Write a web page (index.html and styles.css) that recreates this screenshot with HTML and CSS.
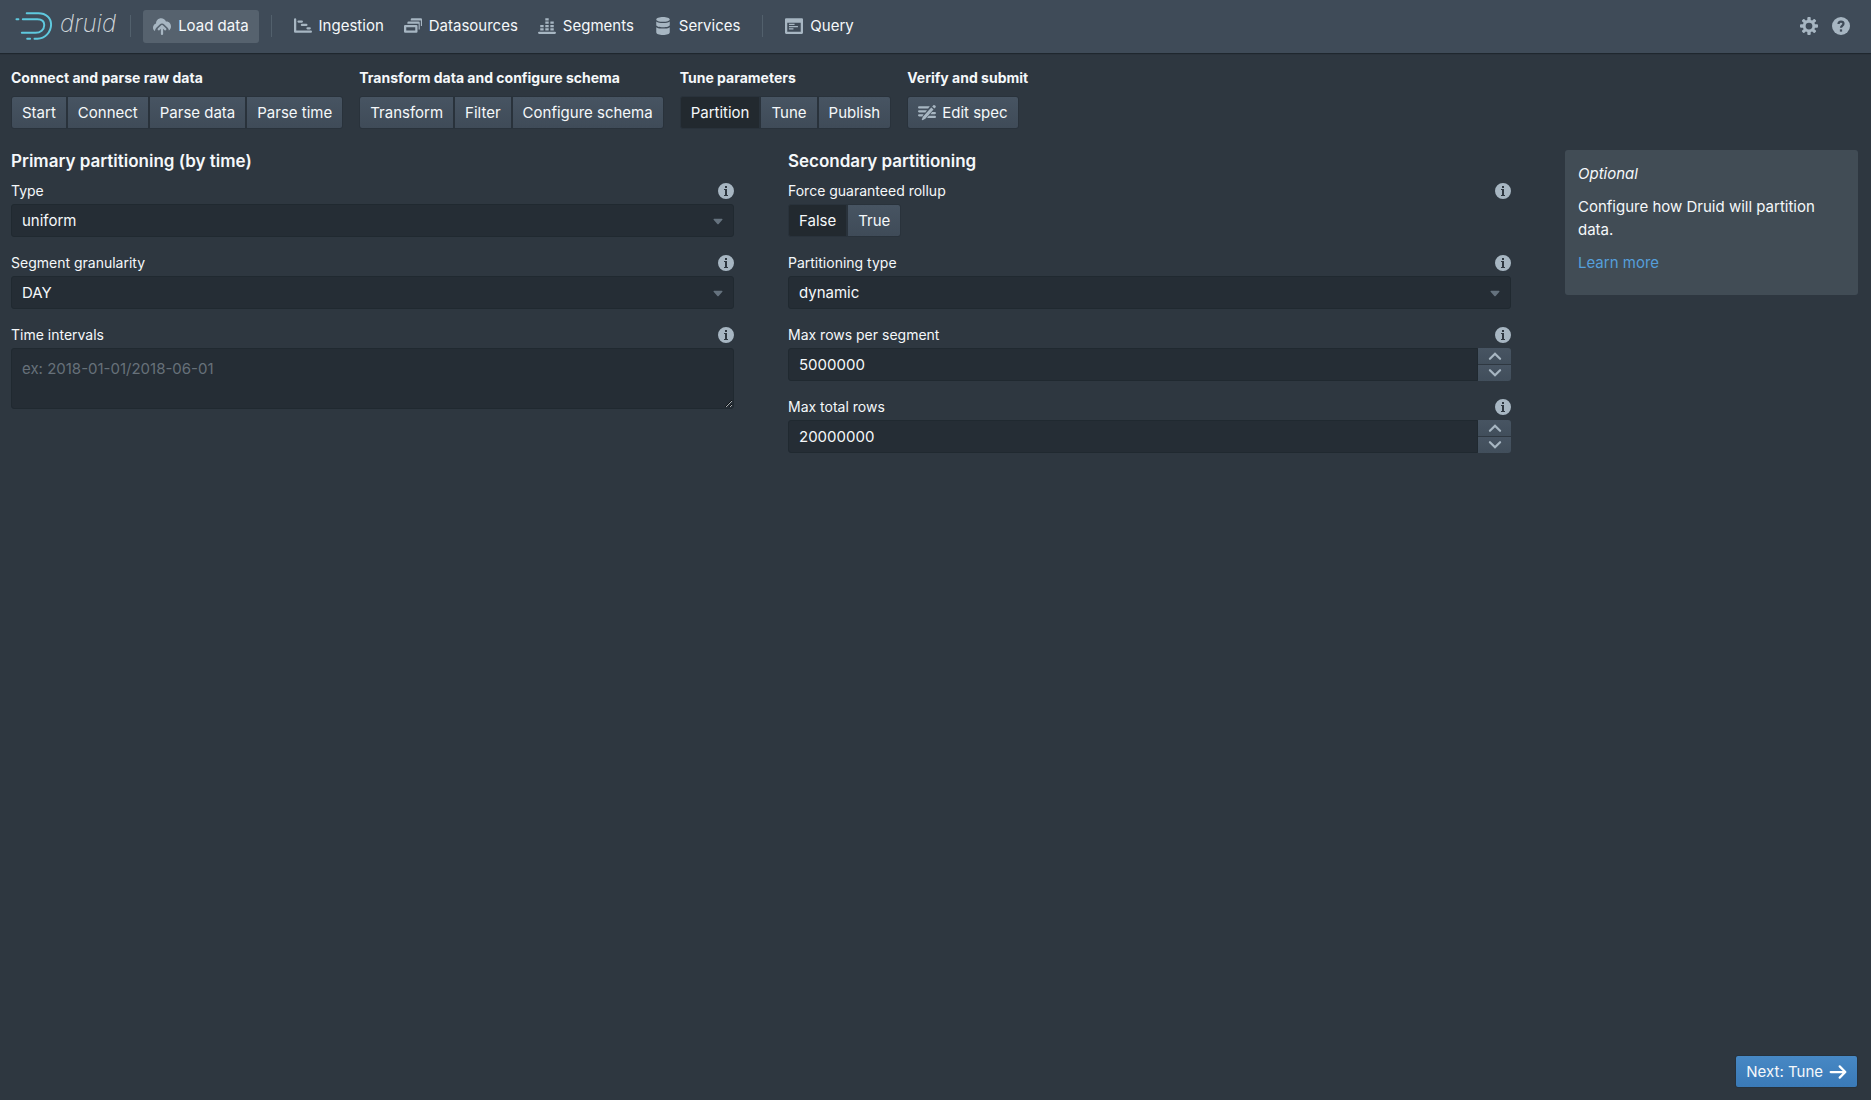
FILE: index.html
```html
<!DOCTYPE html>
<html lang="en">
  <head>
    <meta charset="UTF-8" />
    <meta name="viewport" content="width=device-width, initial-scale=1.0" />
    <title>Apache Druid</title>
    <link rel="stylesheet" href="styles.css">
  </head>
  <body>
    <!-- shared icons -->
    <svg class="sprite" aria-hidden="true">
      <symbol id="info" viewBox="0 0 16 16">
        <path fill-rule="evenodd" d="M8 0a8 8 0 1 0 0 16A8 8 0 0 0 8 0zM7 3h2v2H7V3zm3 10H6v-1h1V7H6V6h3v6h1v1z" />
      </symbol>
      <symbol id="up" viewBox="0 0 16 16">
        <path d="M3.500 10.500 8 6l4.500 4.500" fill="none" stroke="currentColor" stroke-width="2" stroke-linecap="round" />
      </symbol>
      <symbol id="down" viewBox="0 0 16 16">
        <path d="M3.500 5.500 8 10l4.500-4.500" fill="none" stroke="currentColor" stroke-width="2" stroke-linecap="round" />
      </symbol>
      <symbol id="caret" viewBox="0 0 16 16">
        <path d="M4 6.500c0-.3.200-.5.500-.5h7c.3 0 .5.200.5.500 0 .1 0 .2-.1.300l-3.500 4c-.2.200-.6.200-.8 0l-3.500-4C4 6.700 4 6.600 4 6.500z" />
      </symbol>
    </svg>

    <header class="navbar">
      <a class="logo" href="#" aria-label="druid">
        <svg class="logo-mark" viewBox="0 0 40 30" stroke="#5fc9de" stroke-width="2" stroke-linecap="round">
          <path d="M12 2h12c8 0 13 5 13 11.500C37 21 31 28 23 28h-3" />
          <path d="M8 8h15c4 0 7 2 7 6 0 5-4 8-9 8H7" />
          <path d="M1.500 8h2M12.500 28h3" />
        </svg>
        <span class="logo-text">druid</span>
      </a>
      <span class="divider"></span>
      <nav class="nav">
        <a class="nav-item active" href="#">
          <svg class="icon" viewBox="0 0 16 16"><path d="M8.700 7.300C8.500 7.100 8.300 7 8 7s-.5.100-.7.300l-3 3a1 1 0 0 0 1.400 1.400L7 10.400V15a1 1 0 0 0 2 0v-4.600l1.300 1.300a1 1 0 0 0 1.400-1.400l-3-3zM12 4c-.2 0-.3 0-.5.100C11 2.200 9.200 1 7.200 1 4.700 1 2.700 3 2.700 5.500v.3C1.200 6.300 0 7.800 0 9.500c0 1.200.7 2.300 1.700 3 0-.2 0-.3.100-.5.100-1 .6-1.800 1.200-2.400l3-3C6.500 6 7.200 5.700 8 5.700s1.500.300 2 .9l3 3c.7.700 1.100 1.600 1.100 2.500C15.300 11.300 16 10 16 8.500 16 6 14.300 4 12 4z" /></svg>
          Load data
        </a>
        <span class="divider"></span>
        <a class="nav-item" href="#">
          <svg class="icon" viewBox="0 0 16 16"><path d="M2 12V2a1 1 0 0 0-2 0v11a1 1 0 0 0 1 1h14a1 1 0 0 0 0-2H2zM4 3h3a1 1 0 0 1 0 2H4a1 1 0 0 1 0-2zm3 3h4a1 1 0 0 1 0 2H7a1 1 0 0 1 0-2zm5 3h2a1 1 0 0 1 0 2h-2a1 1 0 0 1 0-2z" /></svg>
          Ingestion
        </a>
        <a class="nav-item" href="#">
          <svg class="icon" viewBox="0 0 16 16"><path fill-rule="evenodd" d="M1 7h10a1 1 0 0 1 1 1v5a1 1 0 0 1-1 1H1a1 1 0 0 1-1-1V8a1 1 0 0 1 1-1zm1 2v3h8V9H2z" /><path d="M3 6V5a1 1 0 0 1 1-1h9a1 1 0 0 1 1 1v6h-1V6H3zM6 3V2a1 1 0 0 1 1-1h8a1 1 0 0 1 1 1v6h-1V3H6z" /></svg>
          Datasources
        </a>
        <a class="nav-item" href="#">
          <svg class="icon" viewBox="0 0 16 16"><path d="M1 13h14a1 1 0 0 1 0 2H1a1 1 0 0 1 0-2zM2 10h3v2H2zM2 7h3v2H2zM6.500 10h3v2h-3zM6.500 4h3v2h-3zM6.500 1h3v2h-3zM6.500 7h3v2h-3zM11 4h3v2h-3zM11 7h3v2h-3zM11 10h3v2h-3z" /></svg>
          Segments
        </a>
        <a class="nav-item" href="#">
          <svg class="icon" viewBox="0 0 16 16"><path d="M2 2.200C2 1 4.700 0 8 0s6 1 6 2.200S11.300 4.300 8 4.300 2 3.400 2 2.200zM2 4c1.200 1 3.500 1.400 6 1.400S12.800 5 14 4v3c0 1.200-2.700 2-6 2S2 8.200 2 7V4zm0 5c1.200 1 3.500 1.300 6 1.300S12.800 10 14 9v4.500c0 1.500-2.700 2.500-6 2.500s-6-1-6-2.500V9z" /></svg>
          Services
        </a>
        <span class="divider"></span>
        <a class="nav-item" href="#">
          <svg class="icon" viewBox="0 0 16 16"><path fill-rule="evenodd" d="M1 1h14a1 1 0 0 1 1 1v12a1 1 0 0 1-1 1H1a1 1 0 0 1-1-1V2a1 1 0 0 1 1-1zm1 4v8h12V5H2zm1.500 1h5v1h-5zm0 2h8v1h-8zm0 2h4v1h-4z" /></svg>
          Query
        </a>
      </nav>
      <div class="nav-right">
        <button class="icon-button" aria-label="Settings">
          <svg class="icon" viewBox="0 0 16 16"><path fill-rule="evenodd" d="M15.200 6.500h-1.900c-.1-.5-.3-.9-.5-1.300l1.300-1.300c.3-.3.300-.8 0-1.100l-.9-.9c-.3-.3-.8-.3-1.100 0l-1.300 1.300c-.4-.2-.8-.4-1.300-.5V.8c0-.4-.3-.8-.8-.8H7.300c-.4 0-.8.300-.8.800v1.900c-.5.100-.9.300-1.300.5L3.900 1.900c-.3-.3-.8-.3-1.100 0l-.9.9c-.3.3-.3.800 0 1.100l1.300 1.300c-.2.400-.4.800-.5 1.300H.8c-.5 0-.8.300-.8.800v1.400c0 .4.300.8.800.8h1.900c.1.500.3.900.5 1.300l-1.300 1.300c-.3.300-.3.800 0 1.100l.9.900c.3.300.8.300 1.100 0l1.300-1.300c.4.200.8.400 1.300.5v1.900c0 .5.300.8.800.8h1.400c.4 0 .8-.3.800-.8v-1.900c.5-.1.900-.3 1.300-.5l1.300 1.300c.3.300.8.300 1.100 0l.9-.9c.3-.3.300-.8 0-1.100l-1.300-1.300c.2-.4.400-.8.500-1.300h1.900c.5 0 .8-.3.800-.8V7.300c0-.5-.3-.8-.8-.8zM8 11a3 3 0 1 1 0-6 3 3 0 0 1 0 6z" /></svg>
        </button>
        <button class="icon-button" aria-label="Help">
          <svg class="icon" viewBox="0 0 16 16"><circle cx="8" cy="8" r="8" /><path d="M5.800 6.200C5.800 4.700 6.700 4 8 4s2.200.700 2.200 1.900C10.200 7.500 8 7.700 8 9.500" fill="none" stroke="#3f4b58" stroke-width="2" /><path d="M7 11h2v2H7z" fill="#3f4b58" /></svg>
        </button>
      </div>
    </header>

    <main class="load-data">
      <div class="steps">
        <section class="step-section">
          <h2>Connect and parse raw data</h2>
          <div class="button-group">
            <button class="button">Start</button>
            <button class="button">Connect</button>
            <button class="button">Parse data</button>
            <button class="button">Parse time</button>
          </div>
        </section>
        <section class="step-section">
          <h2>Transform data and configure schema</h2>
          <div class="button-group">
            <button class="button">Transform</button>
            <button class="button">Filter</button>
            <button class="button">Configure schema</button>
          </div>
        </section>
        <section class="step-section">
          <h2>Tune parameters</h2>
          <div class="button-group">
            <button class="button selected">Partition</button>
            <button class="button">Tune</button>
            <button class="button">Publish</button>
          </div>
        </section>
        <section class="step-section">
          <h2>Verify and submit</h2>
          <div class="button-group">
            <button class="button">
              <svg class="icon" viewBox="0 0 16 16"><path d="M1 2h9.500L9 4H1a1 1 0 0 1 0-2zM1 5.500h7L6.500 7.500H1a1 1 0 0 1 0-2zM1 9h4l-1.200 2H1a1 1 0 0 1 0-2zM12.500 7H15a1 1 0 0 1 0 2h-4zM9.500 10.500H15a1 1 0 0 1 0 2H8zM11.800 3.200l2 1.700-7.300 8.200-2.500 1.400-.7-.6 1-2.500zM12.600 2.300l1.100-1.200c.7-.8 2.700.9 2 1.700l-1.100 1.200z" /></svg>
              Edit spec
            </button>
          </div>
        </section>
      </div>

      <div class="content">
        <section class="column">
          <h3>Primary partitioning (by time)</h3>
          <div class="field">
            <div class="field-label">
              <label for="type">Type</label>
              <button class="info" aria-label="About type"><svg><use href="#info" /></svg></button>
            </div>
            <div class="select">
              <select id="type"><option>uniform</option><option>hashed</option></select>
              <svg class="caret"><use href="#caret" /></svg>
            </div>
          </div>
          <div class="field">
            <div class="field-label">
              <label for="granularity">Segment granularity</label>
              <button class="info" aria-label="About segment granularity"><svg><use href="#info" /></svg></button>
            </div>
            <div class="select">
              <select id="granularity"><option>DAY</option><option>HOUR</option></select>
              <svg class="caret"><use href="#caret" /></svg>
            </div>
          </div>
          <div class="field">
            <div class="field-label">
              <label for="intervals">Time intervals</label>
              <button class="info" aria-label="About time intervals"><svg><use href="#info" /></svg></button>
            </div>
            <textarea id="intervals" placeholder="ex: 2018-01-01/2018-06-01"></textarea>
          </div>
        </section>

        <section class="column">
          <h3>Secondary partitioning</h3>
          <div class="field">
            <div class="field-label">
              <span id="rollup">Force guaranteed rollup</span>
              <button class="info" aria-label="About guaranteed rollup"><svg><use href="#info" /></svg></button>
            </div>
            <div class="button-group" role="group" aria-labelledby="rollup">
              <button class="button selected">False</button>
              <button class="button">True</button>
            </div>
          </div>
          <div class="field">
            <div class="field-label">
              <label for="partitioning">Partitioning type</label>
              <button class="info" aria-label="About partitioning type"><svg><use href="#info" /></svg></button>
            </div>
            <div class="select">
              <select id="partitioning"><option>dynamic</option><option>hashed</option></select>
              <svg class="caret"><use href="#caret" /></svg>
            </div>
          </div>
          <div class="field">
            <div class="field-label">
              <label for="maxSegment">Max rows per segment</label>
              <button class="info" aria-label="About max rows per segment"><svg><use href="#info" /></svg></button>
            </div>
            <div class="numeric">
              <input type="text" id="maxSegment" value="5000000" />
              <div class="spinner">
                <button aria-label="Increase"><svg><use href="#up" /></svg></button>
                <button aria-label="Decrease"><svg><use href="#down" /></svg></button>
              </div>
            </div>
          </div>
          <div class="field">
            <div class="field-label">
              <label for="maxTotal">Max total rows</label>
              <button class="info" aria-label="About max total rows"><svg><use href="#info" /></svg></button>
            </div>
            <div class="numeric">
              <input type="text" id="maxTotal" value="20000000" />
              <div class="spinner">
                <button aria-label="Increase"><svg><use href="#up" /></svg></button>
                <button aria-label="Decrease"><svg><use href="#down" /></svg></button>
              </div>
            </div>
          </div>
        </section>

        <aside class="callout">
          <p><em>Optional</em></p>
          <p>Configure how Druid will partition data.</p>
          <p><a href="#">Learn more</a></p>
        </aside>
      </div>

      <div class="next-bar">
        <button class="button primary">
          Next: Tune
          <svg class="icon" viewBox="0 0 16 16" stroke="currentColor" stroke-width="2" stroke-linecap="round" stroke-linejoin="round"><path d="M1.500 8h13M9.500 3l5 5-5 5" /></svg>
        </button>
      </div>
    </main>
  </body>
</html>
```
FILE: styles.css
```css
* {
  box-sizing: border-box;
}
body {
  margin: 0;
  min-height: 100vh;
  display: flex;
  flex-direction: column;
  background-color: #2e3740;
  color: #f5f8fa;
  font-family: Inter, "Liberation Sans", sans-serif;
  font-size: 15px;
  line-height: 20px;
}
button,
input,
select,
textarea {
  font: inherit;
  color: inherit;
}
button {
  cursor: pointer;
}
svg {
  fill: currentColor;
}
.sprite {
  display: none;
}
.icon {
  width: 18px;
  height: 18px;
  flex: none;
  color: #a7b6c2;
}

.navbar {
  display: flex;
  align-items: center;
  height: 53px;
  padding: 0 14px 1px 15px;
  background-color: #3f4b58;
  box-shadow: 0 1px 1px #1f272e;
}
.logo {
  display: flex;
  align-items: center;
  gap: 6px;
  margin-right: 2px;
  color: #cfd5da;
  text-decoration: none;
}
.logo-mark {
  width: 39px;
  height: 30px;
  fill: none;
}
.logo-text {
  padding-bottom: 4px;
  font-size: 24px;
  font-weight: 200;
  font-style: italic;
  line-height: 28px;
}
.divider {
  width: 1px;
  height: 22px;
  margin: 0 12px;
  background-color: #52606c;
}
.nav {
  display: flex;
  align-items: center;
}
.nav-item {
  display: flex;
  align-items: center;
  gap: 7px;
  height: 33px;
  padding: 0 10px;
  border-radius: 3px;
  color: #f5f8fa;
  text-decoration: none;
}
.nav-item.active {
  background-color: #56626e;
}
.nav-right {
  display: flex;
  margin-left: auto;
}
.icon-button {
  display: flex;
  padding: 7px;
  border: none;
  background: none;
}
.icon-button:last-child {
  padding-right: 7px;
}

.load-data {
  flex: 1;
  display: flex;
  flex-direction: column;
  padding: 15px 13px 12px 11px;
}
.steps {
  display: flex;
  gap: 16px;
}
.step-section h2 {
  margin: 0 0 8px;
  font-size: 14px;
  font-weight: 700;
}
.button-group {
  display: flex;
}
.button {
  display: flex;
  align-items: center;
  gap: 6px;
  height: 33px;
  padding: 0 10px;
  border: 1px solid #29323b;
  background: linear-gradient(#475462, #3f4b58);
}
.button:first-child {
  border-radius: 3px 0 0 3px;
}
.button:last-child {
  border-radius: 0 3px 3px 0;
}
.button:only-child {
  border-radius: 3px;
}
.button.selected {
  background: #22292f;
}
.button.primary {
  border-color: #26323d;
  background: linear-gradient(#4788c4, #3a7ab8);
}
.primary .icon {
  fill: none;
  color: #fff;
}

.content {
  display: grid;
  grid-template-columns: 1fr 1fr 293px;
  gap: 54px;
  align-items: start;
  margin-top: 21px;
}
.column h3 {
  margin: 1px 0 10px;
  font-size: 17px;
  font-weight: 600;
  line-height: 20px;
}
.field {
  margin-bottom: 16px;
}
.field-label {
  display: flex;
  justify-content: space-between;
  align-items: center;
  margin-bottom: 3px;
  font-size: 14px;
}
.info {
  display: flex;
  padding: 0;
  border: none;
  background: none;
  color: #a7b6c2;
}
.info svg {
  width: 16px;
  height: 16px;
}
.select {
  position: relative;
}
.select select,
.numeric input,
textarea {
  display: block;
  width: 100%;
  height: 33px;
  padding: 0 10px;
  border: 1px solid #202930;
  border-radius: 3px;
  background-color: #252d35;
}
.select select {
  appearance: none;
}
.caret {
  position: absolute;
  right: 7px;
  top: 8px;
  width: 18px;
  height: 18px;
  color: #65727e;
  pointer-events: none;
}
textarea {
  height: 61px;
  padding: 10px;
  resize: vertical;
}
textarea::placeholder {
  color: #67717a;
}
.numeric {
  display: flex;
}
.numeric input {
  flex: 1;
  border-radius: 3px 0 0 3px;
}
.spinner {
  display: flex;
  flex-direction: column;
  gap: 1px;
  width: 33px;
  height: 33px;
}
.spinner button {
  flex: 1;
  display: flex;
  align-items: center;
  justify-content: center;
  min-height: 0;
  padding: 0;
  border: none;
  background: linear-gradient(#475462, #414e5b);
  color: #a7b6c2;
}
.spinner button:first-child {
  border-radius: 0 3px 0 0;
}
.spinner button:last-child {
  border-radius: 0 0 3px 0;
}
.spinner svg {
  width: 18px;
  height: 18px;
}
.callout {
  padding: 12px 13px 11px;
  border-radius: 3px;
  background-color: #414c55;
  line-height: 23px;
}
.callout p {
  margin: 0 0 10px;
}
.callout a {
  color: #559fdb;
  text-decoration: none;
}
.next-bar {
  display: flex;
  justify-content: flex-end;
  margin-top: auto;
}
```
